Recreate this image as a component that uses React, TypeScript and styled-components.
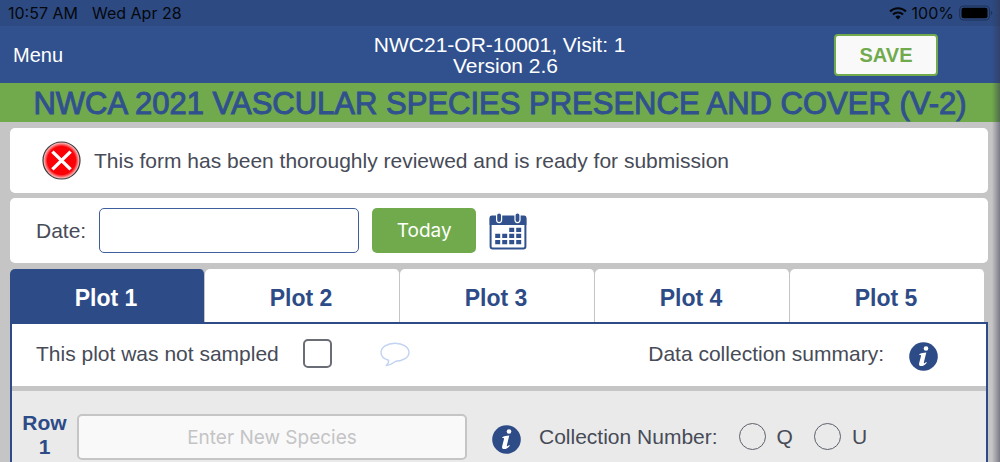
import React, { useState } from "react";
import styled, { createGlobalStyle } from "styled-components";

const blue = "#2d4b87";
const green = "#70aa4c";
const grey = "#c5c5c5";
const ink = "#474b57";
const sans = '"Liberation Sans", Arial, sans-serif';
const system = 'Inter, "Liberation Sans", sans-serif';

const GlobalStyle = createGlobalStyle`
  *, *::before, *::after { box-sizing: border-box; }
  body {
    margin: 0;
    background: ${grey};
    color: ${ink};
    font-family: ${sans};
    font-size: 21px;
    line-height: 24px;
    overflow: hidden;
  }
`;

const Page = styled.div`
  display: flex;
  flex-direction: column;
  min-height: 100vh;
`;

const EdgeShadow = styled.div`
  position: fixed;
  top: 0;
  right: 0;
  bottom: 0;
  width: 8px;
  pointer-events: none;
  background: linear-gradient(to right, rgba(50, 50, 75, 0), rgba(50, 50, 75, 0.5));
`;

const StatusBar = styled.div`
  display: flex;
  align-items: center;
  gap: 14px;
  height: 26px;
  padding: 0 7px 0 8px;
  background: #2d4b82;
  color: #05070c;
  font-family: ${system};
  font-size: 16px;
`;

const StatusIcons = styled.div`
  display: flex;
  align-items: center;
  gap: 5px;
  margin-left: auto;
`;

const Header = styled.header`
  display: grid;
  grid-template-columns: 1fr auto 1fr;
  align-items: center;
  height: 57px;
  padding: 0 62px 0 13px;
  background: #31518e;
  color: #fff;
`;

const MenuButton = styled.button`
  justify-self: start;
  padding: 2px 0 0;
  border: 0;
  background: none;
  color: inherit;
  font-family: ${sans};
  font-size: 20px;
`;

const Visit = styled.div`
  padding-left: 60px;
  font-size: 21px;
  line-height: 21px;
  text-align: center;
`;

const SaveButton = styled.button`
  justify-self: end;
  width: 104px;
  height: 42px;
  padding: 2px 0 0;
  border: 2px solid ${green};
  border-radius: 4px;
  background: #f9f9f9;
  color: ${green};
  font-family: ${sans};
  font-size: 20px;
  font-weight: 700;
`;

const Title = styled.h1`
  margin: 0;
  padding-top: 3px;
  background: ${green};
  color: #31518e;
  font-size: 31px;
  font-weight: 400;
  line-height: 36px;
  text-align: center;
  white-space: nowrap;
  -webkit-text-stroke: 1px #31518e;
`;

const Content = styled.main`
  display: flex;
  flex: 1;
  flex-direction: column;
  gap: 5px;
  padding: 6px 12px 0 10px;
`;

const Card = styled.section<{ $inset: number }>`
  display: flex;
  align-items: center;
  height: 65px;
  padding-left: ${(p) => p.$inset}px;
  border-radius: 5px;
  background: #fff;
`;

const Notice = styled.p`
  margin: 0 0 0 13px;
`;

const DateInput = styled.input`
  width: 260px;
  height: 45px;
  margin: 0 13px;
  padding: 0 12px;
  border: 1px solid #3e5e9c;
  border-radius: 5px;
  background: #fff;
  color: ${ink};
  font-family: ${sans};
  font-size: 21px;
`;

const TodayButton = styled.button`
  width: 104px;
  height: 45px;
  padding: 0;
  border: 0;
  border-radius: 5px;
  background: ${green};
  color: #fff;
  font-family: ${system};
  font-size: 19px;
`;

const IconButton = styled.button<{ $gap?: number; $drop?: number }>`
  display: flex;
  margin: ${(p) => p.$drop ?? 0}px 0 0 ${(p) => p.$gap ?? 0}px;
  padding: 0;
  border: 0;
  background: none;
`;

const Plots = styled.section`
  display: flex;
  flex: 1;
  flex-direction: column;
  padding-top: 1px;
`;

const Tabs = styled.div`
  display: grid;
  grid-template-columns: repeat(5, 1fr);
  height: 53px;
  margin-right: 3px;
`;

const Tab = styled.button<{ $active: boolean }>`
  padding: 5px 2px 0 0;
  border: 0;
  border-right: 1px solid ${grey};
  border-radius: 5px 5px 0 0;
  background: ${(p) => (p.$active ? blue : "#fff")};
  color: ${(p) => (p.$active ? "#fff" : blue)};
  font-family: ${sans};
  font-size: 23px;
  font-weight: 700;
`;

const Panel = styled.div`
  display: flex;
  flex: 1;
  flex-direction: column;
  border: 2px solid ${blue};
  border-bottom: 0;
  background: #eaeaea;
`;

const SampleRow = styled.div`
  display: flex;
  align-items: center;
  height: 67px;
  padding: 0 48px 2px 24px;
  border-bottom: 5px solid ${grey};
  background: #fff;
`;

const CheckBox = styled.input`
  appearance: none;
  width: 29px;
  height: 29px;
  margin: 0 48px 2px 24px;
  border: 2px solid #6a6d76;
  border-radius: 5px;
  background: #fff;
  &:checked { background: ${blue}; }
`;

const Summary = styled.span`
  margin-left: auto;
`;

const SpeciesRow = styled.div`
  display: flex;
  align-items: center;
  padding: 19px 0 0 10px;
`;

const RowName = styled.label`
  width: 45px;
  color: ${blue};
  font-weight: 700;
  text-align: center;
`;

const SpeciesInput = styled.input`
  width: 390px;
  height: 46px;
  margin: 4px 0 0 10px;
  padding: 0;
  border: 2px solid ${grey};
  border-radius: 5px;
  background: #f9f9f9;
  color: ${ink};
  font-family: ${system};
  font-size: 19px;
  text-align: center;
  &::placeholder { color: #c4c4c6; opacity: 1; }
`;

const Choices = styled.fieldset`
  display: flex;
  align-items: center;
  margin: 4px 0 0 18px;
  padding: 0;
  border: 0;
`;

const Choice = styled.label`
  display: flex;
  align-items: center;
  gap: 11px;
  margin-left: 21px;
`;

const Radio = styled.input`
  appearance: none;
  width: 27px;
  height: 27px;
  margin: 0 0 2px;
  border: 1px solid #5c606b;
  border-radius: 50%;
  &:checked { background: ${blue}; }
`;

const WifiIcon = () => (
  <svg width="18" height="13" viewBox="0 0 18 13" fill="none" stroke="#05070c" strokeWidth="2.1" aria-hidden="true">
    <path d="M1 4.6a11.4 11.4 0 0 1 16 0" />
    <path d="M3.9 7.6a7.2 7.2 0 0 1 10.2 0" />
    <path d="M9 12.6 6.3 9.8a3.8 3.8 0 0 1 5.4 0z" fill="#05070c" stroke="none" />
  </svg>
);

const BatteryIcon = () => (
  <svg width="34" height="16" viewBox="0 0 34 16" aria-hidden="true">
    <rect x="0.7" y="1" width="29.8" height="14" rx="4" fill="none" stroke="#1d3157" strokeWidth="1.1" />
    <rect x="2.5" y="2.8" width="26" height="10.4" rx="2" fill="#000" />
    <path d="M32 5.8c1.8.7 1.8 3.7 0 4.4z" fill="#1d3157" />
  </svg>
);

const CrossIcon = () => (
  <svg width="39" height="39" viewBox="0 0 39 39" aria-hidden="true">
    <defs>
      <radialGradient id="glow">
        <stop offset="0.76" stopColor="#fb0007" />
        <stop offset="0.95" stopColor="#fbb5b3" />
      </radialGradient>
    </defs>
    <circle cx="19.5" cy="19.5" r="18.5" fill="url(#glow)" stroke="#39393d" strokeWidth="1.2" />
    <path d="M10.4 10.600 28.600 28.400M28.600 10.600 10.400 28.400" stroke="#fff" strokeWidth="3.4" />
  </svg>
);

const CalendarIcon = () => (
  <svg width="38" height="38" viewBox="0 0 38 38" aria-hidden="true">
    <rect x="1.6" y="5" width="34.8" height="31.400" rx="2" fill="#fff" stroke="#31518e" strokeWidth="2" />
    <path d="M0.6 13V5.600a2.200 2.200 0 0 1 2.200-2.200h32.400a2.200 2.200 0 0 1 2.200 2.200V13z" fill="#31518e" />
    <rect x="7.6" y="0.800" width="5" height="9.800" rx="2.500" fill="#31518e" stroke="#fff" strokeWidth="1.2" />
    <rect x="26" y="0.800" width="5" height="9.800" rx="2.500" fill="#31518e" stroke="#fff" strokeWidth="1.2" />
    <g fill="#31518e">
      <path d="M20.200 15.800h5v4.300h-5zM27.200 15.800h5v4.300h-5z" />
      <path d="M6.200 21.800h5v4.300h-5zM13.200 21.800h5v4.300h-5zM20.200 21.800h5v4.300h-5zM27.200 21.800h5v4.300h-5z" />
      <path d="M6.200 28h5v4.300h-5zM13.200 28h5v4.300h-5zM20.200 28h5v4.300h-5zM27.200 28h5v4.300h-5z" />
    </g>
  </svg>
);

const CommentIcon = () => (
  <svg width="30" height="25" viewBox="0 0 30 25" fill="none" stroke="#c2d2f2" strokeWidth="1.4" aria-hidden="true">
    <path d="M8.600 18.200C4 17 1 14 1 10.500 1 5.300 7.200 1.200 15 1.200S29 5.300 29 10.500c0 5-6 8.600-13.200 8.700-2.600 1.900-5.800 3.800-9.600 4.400 1.700-1.500 2.700-3.200 2.400-5.400z" strokeLinejoin="round" />
  </svg>
);

const InfoIcon = () => (
  <svg width="29" height="29" viewBox="0 0 29 29" aria-hidden="true">
    <circle cx="14.500" cy="14.500" r="14.300" fill={blue} />
    <circle cx="17" cy="6.500" r="2.300" fill="#fff" />
    <path d="M10.300 12.200c1.500-.9 4.300-1.600 7-1.700l-2.400 9.800c-.3 1.300.4 1.300 2.300-.4l.6.800c-1.800 2.200-3.600 3.400-5.600 3.400-1.900 0-2.500-1.200-2-3.100l1.700-6.500c.3-1.200 0-1.500-1.600-1.400z" fill="#fff" />
  </svg>
);

const plots = [1, 2, 3, 4, 5];

export default function App() {
  const [active, setActive] = useState(1);

  return (
    <Page>
      <GlobalStyle />
      <StatusBar>
        <span>10:57 AM</span>
        <span>Wed Apr 28</span>
        <StatusIcons>
          <WifiIcon />
          <span>100%</span>
          <BatteryIcon />
        </StatusIcons>
      </StatusBar>
      <Header>
        <MenuButton type="button">Menu</MenuButton>
        <Visit>
          NWC21-OR-10001, Visit: 1&nbsp;&nbsp;
          <br />
          Version 2.6
        </Visit>
        <SaveButton type="button">SAVE</SaveButton>
      </Header>
      <Title>NWCA 2021 VASCULAR SPECIES PRESENCE AND COVER (V-2)</Title>
      <Content>
        <Card $inset={32}>
          <CrossIcon />
          <Notice>This form has been thoroughly reviewed and is ready for submission</Notice>
        </Card>
        <Card $inset={26}>
          <label htmlFor="date">Date:</label>
          <DateInput id="date" type="text" />
          <TodayButton type="button">Today</TodayButton>
          <IconButton type="button" $gap={13} aria-label="Open calendar">
            <CalendarIcon />
          </IconButton>
        </Card>
        <Plots>
          <Tabs role="tablist">
            {plots.map((n) => (
              <Tab key={n} type="button" role="tab" aria-selected={n === active} $active={n === active} onClick={() => setActive(n)}>
                Plot {n}
              </Tab>
            ))}
          </Tabs>
          <Panel role="tabpanel">
            <SampleRow>
              <label htmlFor="not-sampled">This plot was not sampled</label>
              <CheckBox id="not-sampled" type="checkbox" />
              <IconButton type="button" aria-label="Comment">
                <CommentIcon />
              </IconButton>
              <Summary>Data collection summary:</Summary>
              <IconButton type="button" $gap={25} $drop={4} aria-label="Summary information">
                <InfoIcon />
              </IconButton>
            </SampleRow>
            <SpeciesRow>
              <RowName htmlFor="species">Row 1</RowName>
              <SpeciesInput id="species" type="text" placeholder="Enter New Species" />
              <IconButton type="button" $gap={25} $drop={8} aria-label="Species information">
                <InfoIcon />
              </IconButton>
              <Choices aria-label="Collection Number">
                <span>Collection Number:</span>
                <Choice>
                  <Radio type="radio" name="collection" value="Q" />Q
                </Choice>
                <Choice>
                  <Radio type="radio" name="collection" value="U" />U
                </Choice>
              </Choices>
            </SpeciesRow>
          </Panel>
        </Plots>
      </Content>
      <EdgeShadow />
    </Page>
  );
}
